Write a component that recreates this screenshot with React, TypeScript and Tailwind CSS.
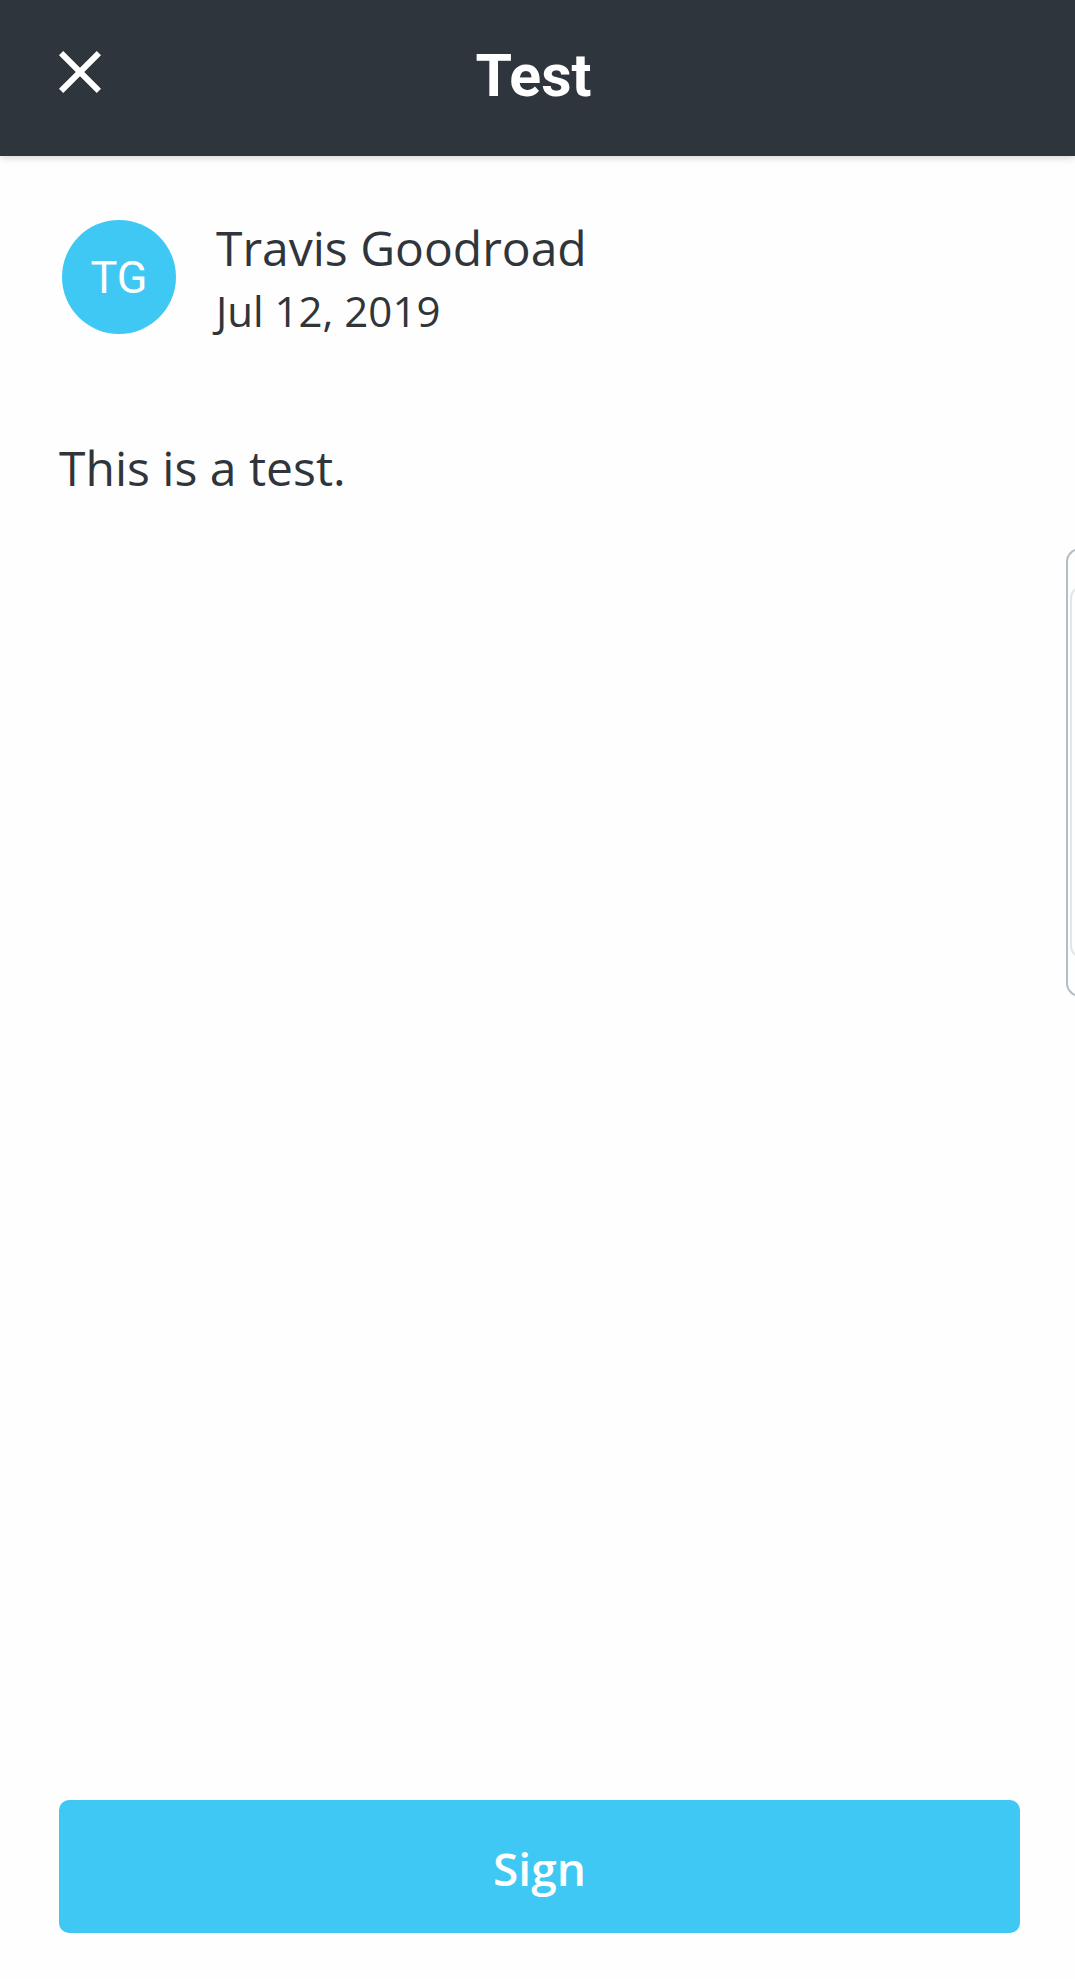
import React from "react"

function CloseIcon() {
  return (
    <svg viewBox="0 0 24 24" className="h-[72px] w-[72px]" fill="white" aria-hidden="true">
      <path d="M19 6.41L17.59 5 12 10.59 6.41 5 5 6.41 10.59 12 5 17.59 6.41 19 12 13.41 17.59 19 19 17.59 13.41 12z" />
    </svg>
  )
}

export default function App() {
  return (
    <div className="relative flex h-screen flex-col overflow-hidden bg-[#fefefe] font-['Open_Sans',sans-serif] text-[#30353c]">
      {/* Top bar */}
      <header className="relative z-10 grid h-[156px] shrink-0 grid-cols-[1fr_auto_1fr] items-center bg-[#2e353d] shadow-[0_2px_7px_rgba(0,0,0,0.16)]">
        <div className="-mt-[12px] pl-[44px]">
          <button type="button" className="block">
            <CloseIcon />
          </button>
        </div>
        <h1 className="-mt-[6px] pr-[8px] font-['Roboto',sans-serif] text-[59px] font-bold leading-[59px] text-white">
          Test
        </h1>
        <div />
      </header>

      {/* Post */}
      <main className="flex flex-1 flex-col pl-[59px] pr-[55px]">
        <div className="mt-[64px] flex items-start gap-[40px] pl-[3px]">
          <div className="flex h-[114px] w-[114px] shrink-0 items-center justify-center rounded-full bg-[#3ec8f3] font-['Roboto',sans-serif] text-[45px] leading-none text-white">
            TG
          </div>
          <div className="flex flex-col">
            <span className="text-[48px] leading-[56px]">Travis Goodroad</span>
            <span className="mt-[7px] text-[42px] leading-[56px]">Jul 12, 2019</span>
          </div>
        </div>

        <p className="mt-[101px] text-[48px] leading-[56px]">This is a test.</p>

        <div className="flex-1" />

        <button
          type="button"
          className="mb-[46px] flex h-[133px] w-full items-center justify-center rounded-[10px] bg-[#3ec8f3] pt-[4px] text-[46px] font-semibold text-white"
        >
          Sign
        </button>
      </main>

      {/* Peeking side panel */}
      <div className="absolute left-[1066px] top-[548px] h-[449px] w-[40px] rounded-l-[14px] border-2 border-r-0 border-[#b3bec4]" />
      <div className="absolute left-[1070px] top-[586px] h-[372px] w-[40px] rounded-l-[12px] border-2 border-r-0 border-[#e2e7ea]" />
    </div>
  )
}
